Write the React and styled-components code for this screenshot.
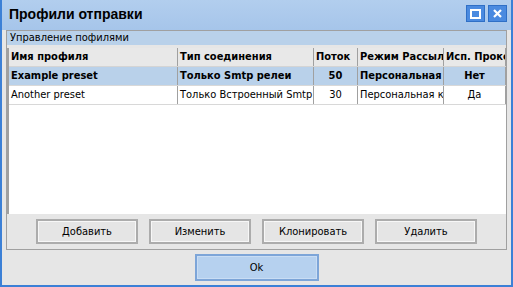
import React from "react";
import styled, { createGlobalStyle } from "styled-components";

const Global = createGlobalStyle`
  html, body { margin: 0; padding: 0; background: #e6e6e6; }
  body { font-family: "DejaVu Sans Condensed", "DejaVu Sans", sans-serif; font-stretch: condensed; }
`;

const uiFont = `"DejaVu Sans Condensed", "DejaVu Sans", sans-serif`;

const Window = styled.div`
  width: 513px;
  height: 287px;
  box-sizing: border-box;
  display: flex;
  flex-direction: column;
  background: #e6e6e6;
  border-left: 2px solid #3c80d6;
  border-right: 2px solid #3c80d6;
  border-bottom: 2px solid #3c80d6;
`;

const TitleBar = styled.div`
  height: 30px;
  flex: none;
  display: flex;
  align-items: flex-start;
  justify-content: space-between;
  background: linear-gradient(#b2ceee, #a6c5ea);
  padding: 4px 4px 0 7px;
  box-sizing: border-box;
`;

const Title = styled.div`
  font-family: "Liberation Sans", Arial, sans-serif;
  font-weight: bold;
  font-size: 14px;
  color: #000;
  padding-top: 2px;
`;

const TitleButtons = styled.div`
  display: flex;
  gap: 3px;
  padding-top: 1px;
`;

const TitleButton = styled.div`
  width: 17px;
  height: 15px;
  background: #4a8ae0;
  border: 1px solid #2f6fc6;
  display: flex;
  align-items: center;
  justify-content: center;
`;

const Body = styled.div`
  flex: 1;
  display: flex;
  flex-direction: column;
  padding: 0 4px;
`;

const Group = styled.div`
  border: 1px solid #a0a0a0;
  display: flex;
  flex-direction: column;
  height: 220px;
  box-sizing: border-box;
`;

const GroupHeader = styled.div`
  background: #b9d1ea;
  height: 14px;
  font-family: ${uiFont};
  font-stretch: condensed;
  font-size: 11px;
  line-height: 14px;
  padding-left: 3px;
  color: #000;
`;

const TableArea = styled.div`
  margin-top: 3px;
  height: 166px;
  background: #fff;
  border-left: 2px solid #a0a0a0;
  display: flex;
  flex-direction: column;
`;

const Row = styled.div`
  display: grid;
  grid-template-columns: 169px 136px 44px 86px 62px;
  height: 18px;
  background: ${(p) => (p.$header ? "#e8e8e8" : p.$selected ? "#b9d1ea" : "#fff")};
  border-bottom: 1px solid ${(p) => (p.$header ? "#d4d4d4" : "#d8d8d8")};
  font-family: ${uiFont};
  font-stretch: condensed;
  font-size: 11px;
  font-weight: ${(p) => (p.$bold ? "bold" : "normal")};
`;

const Cell = styled.div`
  border-right: 1px solid #a0a0a0;
  padding: 0 2px;
  line-height: 18px;
  white-space: nowrap;
  overflow: hidden;
  text-align: ${(p) => (p.$center ? "center" : "left")};
  color: #000;
`;

const ButtonRow = styled.div`
  display: flex;
  gap: 11px;
  padding: 5px 0 0 29px;
`;

const Button = styled.button`
  width: 102px;
  height: 25px;
  box-sizing: border-box;
  background: #e5e5e5;
  border: 2px solid #acacac;
  box-shadow: inset 0 0 0 1px #f7f7f7;
  font-family: ${uiFont};
  font-stretch: condensed;
  font-size: 11px;
  color: #000;
  padding: 0;
`;

const Footer = styled.div`
  display: flex;
  justify-content: center;
  padding-top: 4px;
`;

const OkButton = styled(Button)`
  width: 124px;
  height: 27px;
  background: #b6d1ef;
  border: 2px solid #7da5d8;
  box-shadow: inset 0 0 0 1px #c9ddf4;
`;

const rows = [
  { name: "Example preset", type: "Только Smtp релеи", threads: "50", mode: "Персональная", proxy: "Нет", selected: true },
  { name: "Another preset", type: "Только Встроенный Smtp сервер", threads: "30", mode: "Персональная к", proxy: "Да" },
];

export default function App() {
  return (
    <>
      <Global />
      <Window>
        <TitleBar>
          <Title>Профили отправки</Title>
          <TitleButtons>
            <TitleButton>
              <svg width="11" height="10" viewBox="0 0 11 10">
                <rect x="1" y="1" width="9" height="8" fill="none" stroke="#fff" strokeWidth="2" />
              </svg>
            </TitleButton>
            <TitleButton>
              <svg width="9" height="9" viewBox="0 0 9 9">
                <path d="M1 1 L8 8 M8 1 L1 8" stroke="#fff" strokeWidth="2.2" />
              </svg>
            </TitleButton>
          </TitleButtons>
        </TitleBar>
        <Body>
          <Group>
            <GroupHeader>Управление пофилями</GroupHeader>
            <TableArea>
              <Row $header $bold>
                <Cell>Имя профиля</Cell>
                <Cell>Тип соединения</Cell>
                <Cell>Поток</Cell>
                <Cell>Режим Рассылки</Cell>
                <Cell>Исп. Прокси</Cell>
              </Row>
              {rows.map((r) => (
                <Row key={r.name} $selected={r.selected} $bold={r.selected}>
                  <Cell>{r.name}</Cell>
                  <Cell>{r.type}</Cell>
                  <Cell $center>{r.threads}</Cell>
                  <Cell>{r.mode}</Cell>
                  <Cell $center>{r.proxy}</Cell>
                </Row>
              ))}
            </TableArea>
            <ButtonRow>
              <Button>Добавить</Button>
              <Button>Изменить</Button>
              <Button>Клонировать</Button>
              <Button>Удалить</Button>
            </ButtonRow>
          </Group>
          <Footer>
            <OkButton>Ok</OkButton>
          </Footer>
        </Body>
      </Window>
    </>
  );
}
